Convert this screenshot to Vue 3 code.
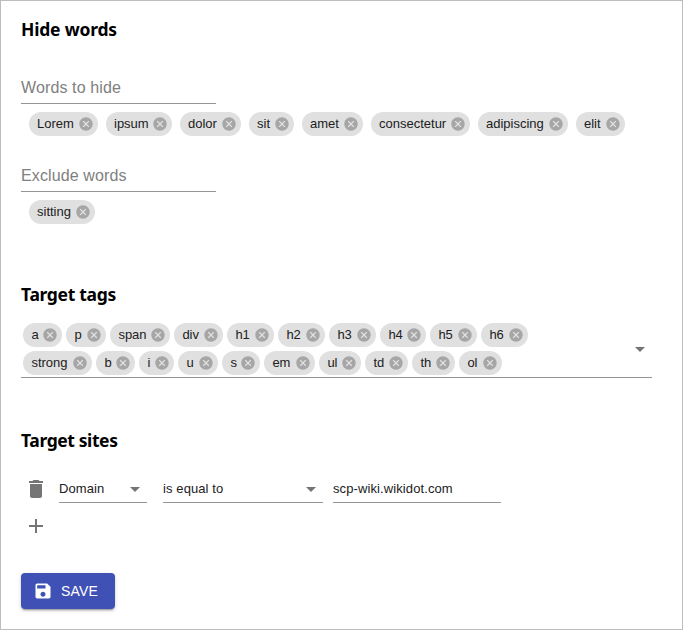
<script setup>
import { ref } from 'vue'

// Each chip is [text, width in px].
const groups = ref([
  {
    label: 'Words to hide',
    words: [['Lorem', 69], ['ipsum', 66], ['dolor', 61], ['sit', 45], ['amet', 61], ['consectetur', 99], ['adipiscing', 90], ['elit', 49]],
  },
  { label: 'Exclude words', words: [['sitting', 66]] },
])
const tagRows = ref([
  [['a', 39], ['p', 40], ['span', 60], ['div', 49], ['h1', 47], ['h2', 47], ['h3', 47], ['h4', 46], ['h5', 47], ['h6', 47]],
  [['strong', 69], ['b', 39], ['i', 35], ['u', 40], ['s', 38], ['em', 51], ['ul', 42], ['td', 43], ['th', 43], ['ol', 43]],
])
const cancel =
  'M12 2C6.47 2 2 6.47 2 12s4.47 10 10 10 10-4.47 10-10S17.53 2 12 2zm5 13.59L15.59 17 12 13.41 8.41 17 7 15.59 10.59 12 7 8.41 8.41 7 12 10.59 15.59 7 17 8.41 13.41 12 17 15.59z'
</script>

<template>
  <main class="page">
    <h3 class="hide-title">Hide words</h3>
    <section v-for="g in groups" :key="g.label" class="group">
      <div class="field">{{ g.label }}</div>
      <div class="chips spaced">
        <span v-for="[w, width] in g.words" :key="w" class="chip" :style="{ width: width + 'px' }">
          <span class="label">{{ w }}</span>
          <svg viewBox="0 0 24 24"><path :d="cancel" /></svg>
        </span>
      </div>
    </section>

    <h3 class="tags-title">Target tags</h3>
    <div class="tag-select">
      <div class="tag-rows">
        <div v-for="(row, i) in tagRows" :key="i" class="chips">
          <span v-for="[t, width] in row" :key="t" class="chip" :style="{ width: width + 'px' }">
            <span class="label">{{ t }}</span>
            <svg viewBox="0 0 24 24"><path :d="cancel" /></svg>
          </span>
        </div>
      </div>
      <svg class="arrow" viewBox="0 0 24 24"><path d="M7 10l5 5 5-5z" /></svg>
    </div>

    <h3 class="sites-title">Target sites</h3>
    <div class="rule">
      <svg class="icon" viewBox="0 0 24 24"><path d="M6 19c0 1.1.9 2 2 2h8c1.1 0 2-.9 2-2V7H6v12zM19 4h-3.5l-1-1h-5l-1 1H5v2h14V4z" /></svg>
      <div class="input domain">
        <span>Domain</span>
        <svg class="arrow" viewBox="0 0 24 24"><path d="M7 10l5 5 5-5z" /></svg>
      </div>
      <div class="input operator">
        <span>is equal to</span>
        <svg class="arrow" viewBox="0 0 24 24"><path d="M7 10l5 5 5-5z" /></svg>
      </div>
      <div class="input value"><span>scp-wiki.wikidot.com</span></div>
    </div>
    <svg class="icon add" viewBox="0 0 24 24"><path d="M19 13h-6v6h-2v-6H5v-2h6V5h2v6h6v2z" /></svg>

    <button class="save">
      <svg viewBox="0 0 24 24"><path d="M17 3H5c-1.11 0-2 .9-2 2v14c0 1.1.89 2 2 2h14c1.1 0 2-.9 2-2V7l-4-4zm-5 16c-1.66 0-3-1.34-3-3s1.34-3 3-3 3 1.34 3 3-1.34 3-3 3zm3-10H5V5h10v4z" /></svg>
      <span>SAVE</span>
    </button>
  </main>
</template>

<style>
body {
  background: #fff;
}
</style>

<style scoped>
* {
  box-sizing: border-box;
}
.page {
  width: 683px;
  height: 630px;
  padding: 16px 30px 0 20px;
  border: 1px solid #bdbdbd;
  background: #fff;
  font-family: "Liberation Sans", Arial, sans-serif;
  font-size: 13px;
  color: #212121;
  overflow: hidden;
}
h3 {
  margin: 0;
  height: 25px;
  font: 700 17.5px/25px "Noto Sans", "Open Sans", sans-serif;
  color: #000;
  white-space: nowrap;
}
.hide-title {
  margin-bottom: 29px;
  letter-spacing: -0.2px;
}
.group {
  display: flex;
  flex-direction: column;
  height: 88px;
}
.field {
  flex: none;
  width: 195px;
  height: 33px;
  padding-top: 7px;
  border-bottom: 1px solid #949494;
  font-size: 16px;
  line-height: 19px;
  letter-spacing: 0.12px;
  color: #808080;
}
.chips {
  display: flex;
  gap: 4px;
}
.spaced {
  gap: 8px;
  padding: 8px 0 0 8px;
}
.chip {
  display: inline-flex;
  align-items: center;
  justify-content: space-between;
  flex: none;
  height: 24px;
  padding: 0 4px 0 8px;
  border-radius: 12px;
  background: #e0e0e0;
}
.chip .label {
  line-height: 24px;
  white-space: nowrap;
}
.chip svg {
  flex: none;
  width: 16px;
  height: 16px;
  fill: #a6a6a6;
}
.tags-title {
  margin: 35px 0 14px;
  letter-spacing: -0.32px;
}
.tag-select {
  display: flex;
  align-items: center;
  justify-content: space-between;
  width: 631px;
  height: 57px;
  padding: 0 0 1px 2px;
  border-bottom: 1px solid #949494;
}
.tag-rows {
  display: flex;
  flex-direction: column;
  gap: 4px;
}
.tag-rows .chip {
  padding-left: 8.4px;
}
.arrow {
  flex: none;
  width: 24px;
  height: 24px;
  fill: #757575;
}
.sites-title {
  margin: 50px 0 22px;
  letter-spacing: -0.4px;
}
.rule {
  display: flex;
  height: 28px;
}
.icon {
  display: block;
  flex: none;
  width: 24px;
  height: 24px;
  margin: 2px 11px 0 3px;
  fill: #757575;
}
.input {
  display: flex;
  align-items: center;
  justify-content: space-between;
  border-bottom: 1px solid #949494;
  letter-spacing: 0.1px;
}
.domain {
  width: 88px;
  margin-right: 16px;
}
.operator {
  width: 160px;
  margin-right: 10px;
}
.value {
  width: 168px;
}
.add {
  margin-top: 11px;
}
.save {
  display: flex;
  align-items: center;
  gap: 8px;
  width: 94px;
  height: 36px;
  margin-top: 35px;
  padding: 0 12px;
  border: 0;
  border-radius: 4px;
  background: #3f51b5;
  box-shadow: 0 3px 1px -2px rgba(0, 0, 0, 0.2), 0 2px 2px 0 rgba(0, 0, 0, 0.14), 0 1px 5px 0 rgba(0, 0, 0, 0.12);
  color: #fff;
  font: 14px/24px "Liberation Sans", Arial, sans-serif;
  letter-spacing: 0.2px;
}
.save svg {
  width: 20px;
  height: 20px;
  fill: #fff;
}
</style>
